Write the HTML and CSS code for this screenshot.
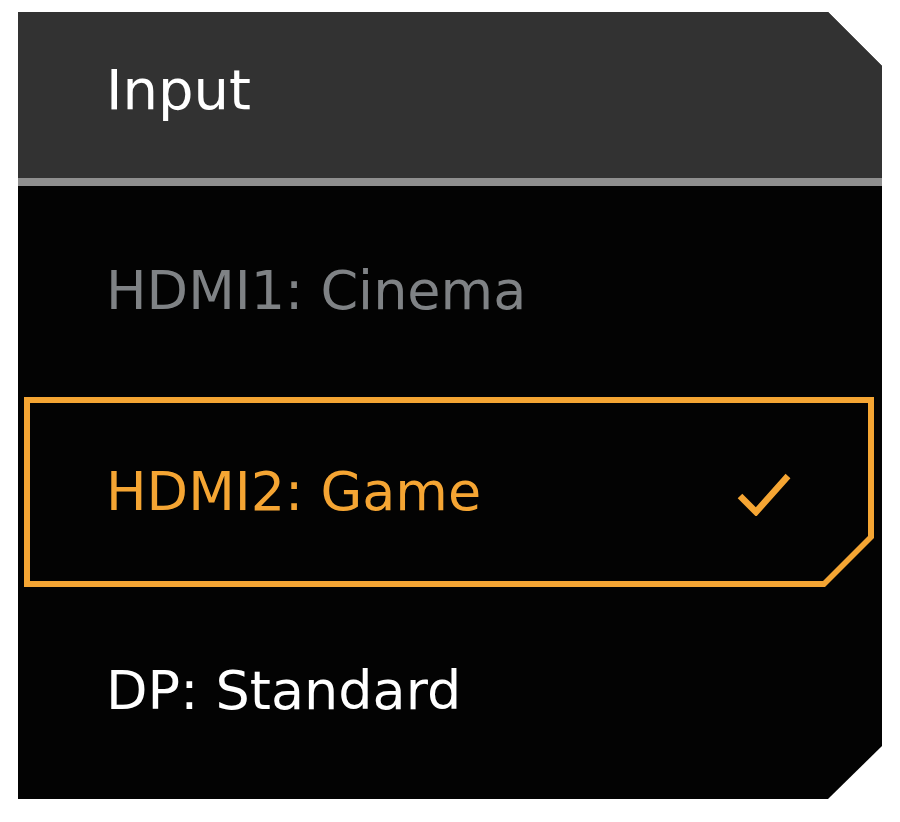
FILE: index.html
```html
<!DOCTYPE html>
<html lang="en">
<head>
<meta charset="UTF-8">
<meta name="viewport" content="width=device-width, initial-scale=1.0">
<title>Input</title>
<link rel="stylesheet" href="styles.css">
</head>
<body>

<div class="osd">
	<div class="osd-head">Input</div>
	<ul class="osd-list">
		<li class="osd-item dim">HDMI1: Cinema</li>
		<li class="osd-item sel">
			<div class="sel-frame">
				<div class="sel-inner">
					<span>HDMI2: Game</span>
					<svg class="tick" width="56" height="48" viewBox="0 0 56 48">
						<polyline points="4,28 20,44 52,8" fill="none" stroke="#f5a533" stroke-width="6.5"/>
					</svg>
				</div>
			</div>
		</li>
		<li class="osd-item">DP: Standard</li>
	</ul>
</div>

</body>
</html>
```
FILE: styles.css
```css
* {box-sizing: border-box;}

body {
	margin: 0;
	background: #fff;}

.osd {
	margin: 12px 0 0 18px;
	width: 864px;
	height: 787px;
	background: #030303;
	font: normal 400 54px/1 'DejaVu Sans', 'Verdana', sans-serif;
	color: #fff;
	clip-path: polygon(0 0, 810px 0, 100% 54px, 100% 734px, 810px 100%, 0 100%);}

.osd-head {
	height: 174px;
	padding: 0 0 10px 88px;
	display: flex;
	align-items: center;
	background: #323232;
	border-bottom: 8px solid #8f8f8f;
	font-size: 56px;}

.osd-list {
	list-style: none;
	margin: 0;
	padding: 5px 0 8px;}

.osd-item {
	height: 200px;
	padding-left: 88px;
	display: flex;
	align-items: center;}

.osd-item.dim {color: #7f8285;}

.osd-item.sel {
	padding: 6px 8px 4px 6px;
	align-items: stretch;}

.sel-frame {
	flex: 1;
	padding: 6px;
	background: #f5a533;
	clip-path: polygon(0 0, 100% 0, 100% calc(100% - 49px), calc(100% - 49px) 100%, 0 100%);}

.sel-inner {
	height: 100%;
	padding-left: 76px;
	display: flex;
	align-items: center;
	background: #030303;
	color: #f5a533;
	clip-path: polygon(0 0, 100% 0, 100% calc(100% - 45px), calc(100% - 45px) 100%, 0 100%);}

.tick {
	margin: 0 76px 0 auto;
	flex-shrink: 0;}
```
